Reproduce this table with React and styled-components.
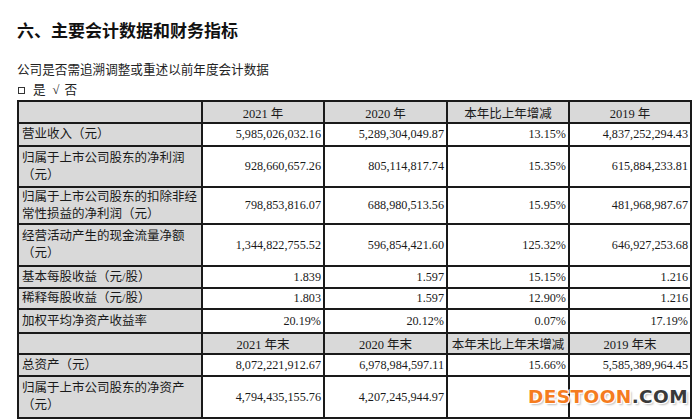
import React from 'react'
import styled, { createGlobalStyle } from 'styled-components'

const GlobalStyle = createGlobalStyle`
  html, body { margin: 0; padding: 0; background: #fff; }
  body { font-family: "Liberation Serif", "Noto Sans CJK SC", serif; color: #111; }
`

const Page = styled.div`
  position: relative;
  width: 700px;
  height: 420px;
  padding: 20px 10px 0 17px;
  box-sizing: border-box;
  overflow: hidden;
`

const Title = styled.h2`
  margin: 0;
  font-family: "Noto Sans CJK SC", sans-serif;
  font-size: 17px;
  line-height: 20px;
  font-weight: 700;
  color: #111;
`

const Line = styled.div`
  font-family: "Liberation Serif", "Noto Sans CJK SC", serif;
  font-size: 12.6px;
  line-height: 18px;
  margin-top: ${p => p.$mt || 0}px;
  color: #222;
  white-space: nowrap;
`

const Box = styled.span`
  display: inline-block;
  width: 5px;
  height: 5px;
  border: 1px solid #333;
  margin: 0 8px 0 1px;
  vertical-align: 0;
`

const Word = styled.span`
  margin-right: ${p => p.$mr || 0}px;
`

const Table = styled.table`
  margin-top: 1px;
  border-collapse: collapse;
  table-layout: fixed;
  width: 673px;
  font-size: 12px;
`

const Row = styled.tr`
  height: ${p => p.$h}px;
`

const Label = styled.td`
  border: 2px solid #1a1a1a;
  background: #d9d9d9;
  padding: 0 2px 0 3px;
  font-size: 12.5px;
  line-height: 17px;
  white-space: nowrap;
  vertical-align: middle;
  color: #1a1a1a;
`

const Head = styled.td`
  border: 2px solid #1a1a1a;
  background: #d9d9d9;
  text-align: center;
  font-size: 12.5px;
  padding: 0;
  white-space: nowrap;
  color: #1a1a1a;
`

const Num = styled.td`
  border: 2px solid #1a1a1a;
  background: #fff;
  text-align: right;
  padding: 0 2px 0 0;
  font-size: 12.2px;
  white-space: nowrap;
  vertical-align: middle;
  color: #1a1a1a;
`

const Watermark = styled.div`
  position: absolute;
  left: 528px;
  top: 386px;
  font-family: "DejaVu Sans", sans-serif;
  font-weight: 700;
  font-size: 18.5px;
  letter-spacing: 0.4px;
  text-shadow: 1px 1px 0 #fff, -1px -1px 0 #fff, 1px -1px 0 #fff, -1px 1px 0 #fff, 2px 2px 2px rgba(0,0,0,0.25);
`

const Orange = styled.span`
  color: #f57c1f;
`

const Dark = styled.span`
  color: #3a3a3a;
`

const rows = [
  { label: ['营业收入（元）'], h: 23, v: ['5,985,026,032.16', '5,289,304,049.87', '13.15%', '4,837,252,294.43'] },
  { label: ['归属于上市公司股东的净利润', '（元）'], h: 41, v: ['928,660,657.26', '805,114,817.74', '15.35%', '615,884,233.81'] },
  { label: ['归属于上市公司股东的扣除非经', '常性损益的净利润（元）'], h: 37, v: ['798,853,816.07', '688,980,513.56', '15.95%', '481,968,987.67'] },
  { label: ['经营活动产生的现金流量净额', '（元）'], h: 42, v: ['1,344,822,755.52', '596,854,421.60', '125.32%', '646,927,253.68'] },
  { label: ['基本每股收益（元/股）'], h: 22, v: ['1.839', '1.597', '15.15%', '1.216'] },
  { label: ['稀释每股收益（元/股）'], h: 21, v: ['1.803', '1.597', '12.90%', '1.216'] },
  { label: ['加权平均净资产收益率'], h: 24, v: ['20.19%', '20.12%', '0.07%', '17.19%'] },
]

const rows2 = [
  { label: ['总资产（元）'], h: 22, v: ['8,072,221,912.67', '6,978,984,597.11', '15.66%', '5,585,389,964.45'] },
  { label: ['归属于上市公司股东的净资产', '（元）'], h: 42, v: ['4,794,435,155.76', '4,207,245,944.97', '', ''] },
]

const renderRow = r => (
  <Row $h={r.h} key={r.label[0]}>
    <Label>{r.label.map((t, i) => <div key={i}>{t}</div>)}</Label>
    {r.v.map((x, i) => <Num key={i}>{x}</Num>)}
  </Row>
)

export default function App() {
  return (
    <Page>
      <GlobalStyle />
      <Title>六、主要会计数据和财务指标</Title>
      <Line $mt={21}>公司是否需追溯调整或重述以前年度会计数据</Line>
      <Line $mt={2}>
        <Box /><Word $mr={7}>是</Word><Word $mr={5}>√</Word><Word>否</Word>
      </Line>
      <Table>
        <colgroup>
          <col style={{ width: 184 }} />
          <col style={{ width: 122 }} />
          <col style={{ width: 123 }} />
          <col style={{ width: 122 }} />
          <col style={{ width: 122 }} />
        </colgroup>
        <tbody>
          <Row $h={22}>
            <Head />
            <Head>2021 年</Head>
            <Head>2020 年</Head>
            <Head>本年比上年增减</Head>
            <Head>2019 年</Head>
          </Row>
          {rows.map(renderRow)}
          <Row $h={21}>
            <Head />
            <Head>2021 年末</Head>
            <Head>2020 年末</Head>
            <Head>本年末比上年末增减</Head>
            <Head>2019 年末</Head>
          </Row>
          {rows2.map(renderRow)}
        </tbody>
      </Table>
      <Watermark><Orange>DESTOON</Orange><Dark>.COM</Dark></Watermark>
    </Page>
  )
}
